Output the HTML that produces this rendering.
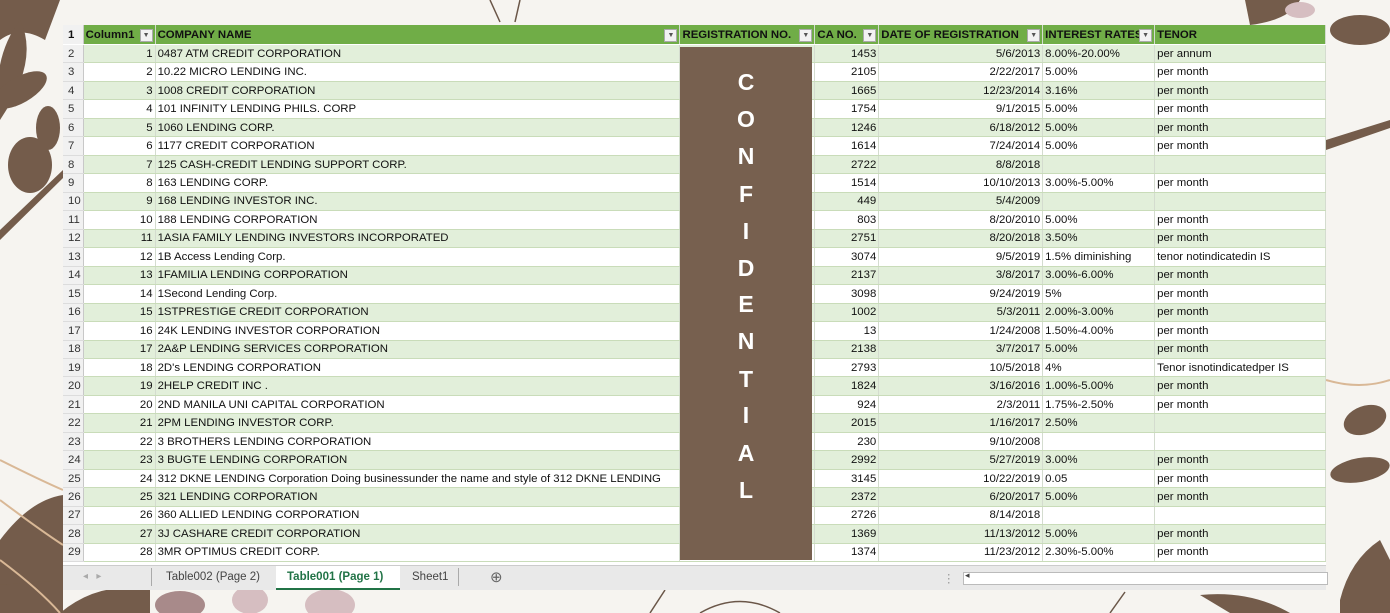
<!DOCTYPE html>
<html><head><meta charset="utf-8"><style>
body{margin:0;width:1390px;height:613px;background:#f6f4f0;position:relative;overflow:hidden;font-family:"Liberation Sans",sans-serif}
.bg{position:absolute;left:0;top:0}
.sheet{position:absolute;left:63px;top:25px;width:1263px;height:541px;background:#fff}
table{border-collapse:collapse;table-layout:fixed;position:absolute;left:0;top:0;font-size:11.4px;color:#111}
tr{height:18.48px}
tr.h{height:19.5px}
td{padding:0 2px;border-right:1px solid #d4dccf;border-bottom:1px solid #c9dcb9;white-space:nowrap;overflow:hidden;line-height:16px}
tr:nth-child(even) td{background:#e2efda}
tr:nth-child(odd) td{background:#fff}
tr.h td{background:#70ad47;font-weight:bold;color:#111;border-bottom:1px solid #fff;position:relative}
td.rn{background:#f1f1f1!important;color:#333;text-align:left;padding-left:5px;border-right:1px solid #c8c8c8;border-bottom:1px solid #dcdcdc}
.r{text-align:right}
.dd{position:absolute;right:2px;top:4px;width:11px;height:11px;background:#f2f2f2;border:1px solid #aaa;font-size:7px;line-height:11px;text-align:center;color:#555;font-weight:normal}
.conf{position:absolute;left:680px;top:47px;width:132px;height:513px;background:#77604f;color:#fff;font-weight:bold;font-size:23px;text-align:center}
.conf div{position:absolute;width:100%;}
.tabs{position:absolute;left:63px;top:565px;width:1263px;height:24px;background:#e9e9e9;border-top:1px solid #ccc;font-size:11.5px;color:#444}
.tabs span{position:absolute;top:5px}
</style></head><body>
<svg class="bg" width="1390" height="613" viewBox="0 0 1390 613">
<g fill="#745c4b">
<path d="M0 0 L60 0 L45 40 Q20 25 0 40Z"/>
<path d="M0 120 Q40 60 20 20 Q-10 60 0 120Z"/>
<ellipse cx="20" cy="90" rx="30" ry="13" transform="rotate(-30 20 90)"/>
<ellipse cx="30" cy="165" rx="22" ry="28"/>
<ellipse cx="48" cy="128" rx="12" ry="22"/>
<path d="M0 230 L63 170 L63 178 L0 240Z"/>
<path d="M0 540 Q30 500 63 495 L63 613 L0 613Z"/>
<path d="M1245 0 L1300 0 Q1290 20 1250 25Z"/>
<ellipse cx="1360" cy="30" rx="30" ry="15"/>
<ellipse cx="1365" cy="420" rx="22" ry="14" transform="rotate(-20 1365 420)"/>
<ellipse cx="1360" cy="470" rx="30" ry="12" transform="rotate(-10 1360 470)"/>
<path d="M1326 140 L1390 120 L1390 128 L1326 150Z"/>
<path d="M1340 600 Q1350 560 1380 540 L1390 560 L1390 613 L1340 613Z"/>
<path d="M1200 595 Q1250 590 1290 613 L1230 613Z"/>
<path d="M0 585 L63 580 L63 613 L0 613Z"/>
<path d="M60 613 Q100 580 150 590 L150 613Z"/>
</g>
<g fill="#a88a8a"><ellipse cx="180" cy="605" rx="25" ry="14"/></g>
<g fill="#d6bec1"><ellipse cx="250" cy="600" rx="18" ry="14"/><ellipse cx="330" cy="605" rx="25" ry="16"/><ellipse cx="1300" cy="10" rx="15" ry="8"/></g>
<g fill="none" stroke="#d9b896" stroke-width="2"><path d="M0 460 Q40 480 63 490"/><path d="M0 500 Q40 530 63 545"/><path d="M0 560 Q40 590 60 613"/><path d="M1326 380 Q1360 390 1390 380"/></g>
<g fill="none" stroke="#6a5648" stroke-width="1.5"><path d="M490 0 L500 22"/><path d="M520 0 L515 22"/><path d="M650 613 L665 590"/><path d="M700 613 Q740 590 780 613"/><path d="M1110 613 L1125 592"/></g>
</svg>
<div class="sheet">
<table>
<colgroup><col style="width:20px"><col style="width:72px"><col style="width:525px"><col style="width:135px"><col style="width:64px"><col style="width:164px"><col style="width:112px"><col style="width:171px"></colgroup>
<tr class="h"><td class="rn">1</td><td>Column1<span class="dd">▼</span></td><td>COMPANY NAME<span class="dd">▼</span></td><td>REGISTRATION NO.<span class="dd">▼</span></td><td>CA NO.<span class="dd">▼</span></td><td>DATE OF REGISTRATION<span class="dd">▼</span></td><td>INTEREST RATES<span class="dd">▼</span></td><td>TENOR</td></tr>
<tr><td class="rn">2</td><td class="r">1</td><td>0487 ATM CREDIT CORPORATION</td><td></td><td class="r">1453</td><td class="r">5/6/2013</td><td>8.00%-20.00%</td><td>per annum</td></tr>
<tr><td class="rn">3</td><td class="r">2</td><td>10.22 MICRO LENDING INC.</td><td></td><td class="r">2105</td><td class="r">2/22/2017</td><td>5.00%</td><td>per month</td></tr>
<tr><td class="rn">4</td><td class="r">3</td><td>1008 CREDIT CORPORATION</td><td></td><td class="r">1665</td><td class="r">12/23/2014</td><td>3.16%</td><td>per month</td></tr>
<tr><td class="rn">5</td><td class="r">4</td><td>101 INFINITY LENDING PHILS. CORP</td><td></td><td class="r">1754</td><td class="r">9/1/2015</td><td>5.00%</td><td>per month</td></tr>
<tr><td class="rn">6</td><td class="r">5</td><td>1060 LENDING CORP.</td><td></td><td class="r">1246</td><td class="r">6/18/2012</td><td>5.00%</td><td>per month</td></tr>
<tr><td class="rn">7</td><td class="r">6</td><td>1177 CREDIT CORPORATION</td><td></td><td class="r">1614</td><td class="r">7/24/2014</td><td>5.00%</td><td>per month</td></tr>
<tr><td class="rn">8</td><td class="r">7</td><td>125 CASH-CREDIT LENDING SUPPORT CORP.</td><td></td><td class="r">2722</td><td class="r">8/8/2018</td><td></td><td></td></tr>
<tr><td class="rn">9</td><td class="r">8</td><td>163 LENDING CORP.</td><td></td><td class="r">1514</td><td class="r">10/10/2013</td><td>3.00%-5.00%</td><td>per month</td></tr>
<tr><td class="rn">10</td><td class="r">9</td><td>168 LENDING INVESTOR INC.</td><td></td><td class="r">449</td><td class="r">5/4/2009</td><td></td><td></td></tr>
<tr><td class="rn">11</td><td class="r">10</td><td>188 LENDING CORPORATION</td><td></td><td class="r">803</td><td class="r">8/20/2010</td><td>5.00%</td><td>per month</td></tr>
<tr><td class="rn">12</td><td class="r">11</td><td>1ASIA FAMILY LENDING INVESTORS INCORPORATED</td><td></td><td class="r">2751</td><td class="r">8/20/2018</td><td>3.50%</td><td>per month</td></tr>
<tr><td class="rn">13</td><td class="r">12</td><td>1B Access Lending Corp.</td><td></td><td class="r">3074</td><td class="r">9/5/2019</td><td>1.5% diminishing</td><td>tenor notindicatedin IS</td></tr>
<tr><td class="rn">14</td><td class="r">13</td><td>1FAMILIA LENDING CORPORATION</td><td></td><td class="r">2137</td><td class="r">3/8/2017</td><td>3.00%-6.00%</td><td>per month</td></tr>
<tr><td class="rn">15</td><td class="r">14</td><td>1Second Lending Corp.</td><td></td><td class="r">3098</td><td class="r">9/24/2019</td><td>5%</td><td>per month</td></tr>
<tr><td class="rn">16</td><td class="r">15</td><td>1STPRESTIGE CREDIT CORPORATION</td><td></td><td class="r">1002</td><td class="r">5/3/2011</td><td>2.00%-3.00%</td><td>per month</td></tr>
<tr><td class="rn">17</td><td class="r">16</td><td>24K LENDING INVESTOR CORPORATION</td><td></td><td class="r">13</td><td class="r">1/24/2008</td><td>1.50%-4.00%</td><td>per month</td></tr>
<tr><td class="rn">18</td><td class="r">17</td><td>2A&amp;P LENDING SERVICES CORPORATION</td><td></td><td class="r">2138</td><td class="r">3/7/2017</td><td>5.00%</td><td>per month</td></tr>
<tr><td class="rn">19</td><td class="r">18</td><td>2D's LENDING CORPORATION</td><td></td><td class="r">2793</td><td class="r">10/5/2018</td><td>4%</td><td>Tenor isnotindicatedper IS</td></tr>
<tr><td class="rn">20</td><td class="r">19</td><td>2HELP CREDIT INC .</td><td></td><td class="r">1824</td><td class="r">3/16/2016</td><td>1.00%-5.00%</td><td>per month</td></tr>
<tr><td class="rn">21</td><td class="r">20</td><td>2ND MANILA UNI CAPITAL CORPORATION</td><td></td><td class="r">924</td><td class="r">2/3/2011</td><td>1.75%-2.50%</td><td>per month</td></tr>
<tr><td class="rn">22</td><td class="r">21</td><td>2PM LENDING INVESTOR CORP.</td><td></td><td class="r">2015</td><td class="r">1/16/2017</td><td>2.50%</td><td></td></tr>
<tr><td class="rn">23</td><td class="r">22</td><td>3 BROTHERS LENDING CORPORATION</td><td></td><td class="r">230</td><td class="r">9/10/2008</td><td></td><td></td></tr>
<tr><td class="rn">24</td><td class="r">23</td><td>3 BUGTE LENDING CORPORATION</td><td></td><td class="r">2992</td><td class="r">5/27/2019</td><td>3.00%</td><td>per month</td></tr>
<tr><td class="rn">25</td><td class="r">24</td><td>312 DKNE LENDING Corporation Doing businessunder the name and style of 312 DKNE LENDING</td><td></td><td class="r">3145</td><td class="r">10/22/2019</td><td>0.05</td><td>per month</td></tr>
<tr><td class="rn">26</td><td class="r">25</td><td>321 LENDING CORPORATION</td><td></td><td class="r">2372</td><td class="r">6/20/2017</td><td>5.00%</td><td>per month</td></tr>
<tr><td class="rn">27</td><td class="r">26</td><td>360 ALLIED LENDING CORPORATION</td><td></td><td class="r">2726</td><td class="r">8/14/2018</td><td></td><td></td></tr>
<tr><td class="rn">28</td><td class="r">27</td><td>3J CASHARE CREDIT CORPORATION</td><td></td><td class="r">1369</td><td class="r">11/13/2012</td><td>5.00%</td><td>per month</td></tr>
<tr><td class="rn">29</td><td class="r">28</td><td>3MR OPTIMUS CREDIT CORP.</td><td></td><td class="r">1374</td><td class="r">11/23/2012</td><td>2.30%-5.00%</td><td>per month</td></tr>
</table>
</div>
<div class="conf">
<div style="top:22px">C</div><div style="top:59px">O</div><div style="top:96px">N</div><div style="top:134px">F</div><div style="top:171px">I</div><div style="top:208px">D</div><div style="top:244px">E</div><div style="top:281px">N</div><div style="top:319px">T</div><div style="top:355px">I</div><div style="top:393px">A</div><div style="top:430px">L</div>
</div>
<div class="tabs">
<span style="left:20px;color:#aaa;font-size:10px">◂ &nbsp; ▸</span>
<div style="position:absolute;left:88px;top:2px;width:1px;height:18px;background:#aaa"></div>
<span style="left:103px">Table002 (Page 2)</span>
<div style="position:absolute;left:213px;top:0;width:124px;height:22px;background:#fff;border-bottom:2px solid #217346"></div>
<span style="left:224px;color:#217346;font-weight:bold">Table001 (Page 1)</span>
<span style="left:349px">Sheet1</span>
<div style="position:absolute;left:395px;top:2px;width:1px;height:18px;background:#aaa"></div>
<span style="left:427px;top:2px;font-size:15px;color:#666">⊕</span>
<span style="left:880px;color:#999">⋮</span>
<div style="position:absolute;left:900px;top:6px;width:363px;height:11px;background:#fff;border:1px solid #bbb"></div>
<span style="left:902px;top:4px;font-size:9px">◂</span>
</div>
</body></html>
